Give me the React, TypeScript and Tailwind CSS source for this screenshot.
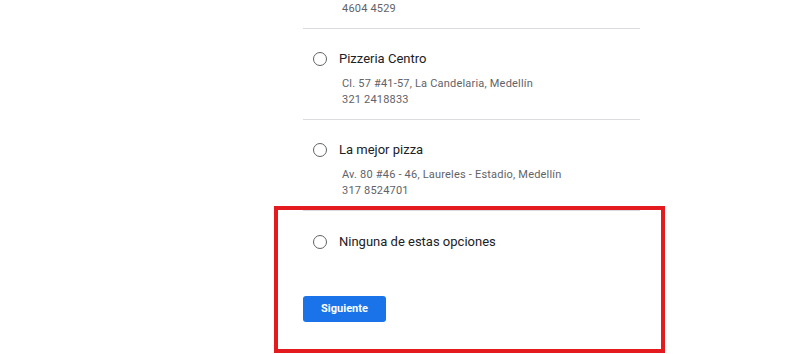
import React from "react";

type Place = { name: string; address: string; phone: string };

const places: Place[] = [
  { name: "Pizzeria Centro", address: "Cl. 57 #41-57, La Candelaria, Medellín", phone: "321 2418833" },
  { name: "La mejor pizza", address: "Av. 80 #46 - 46, Laureles - Estadio, Medellín", phone: "317 8524701" },
];

function Radio() {
  return (
    <span className="block w-[14px] h-[14px] rounded-full border-[1.3px] border-[#5f6368] shrink-0" />
  );
}

function Item({ p }: { p: Place }) {
  return (
    <div className="border-b border-[#dadce0] pt-[20px] pb-[11px]">
      <div className="flex items-center h-[20px] pl-[10px] gap-[12px]">
        <Radio />
        <span className="text-[13px] text-[#202124]">{p.name}</span>
      </div>
      <div className="mt-[7px] pl-[39px] text-[11px] leading-[16px] tracking-[0.2px] text-[#5f6368]">
        <div>{p.address}</div>
        <div>{p.phone}</div>
      </div>
    </div>
  );
}

export default function App() {
  return (
    <div
      className="relative w-[807px] h-[354px] overflow-hidden bg-white"
      style={{ fontFamily: "Roboto, 'Liberation Sans', sans-serif" }}
    >
      <div className="ml-[303px] w-[337px]">
        <div className="border-b border-[#dadce0] pt-[1px] pb-[11px]">
          <div className="pl-[39px] text-[11px] leading-[16px] tracking-[0.2px] text-[#5f6368]">4604 4529</div>
        </div>
        {places.map((p) => (
          <Item key={p.name} p={p} />
        ))}
        <div className="pt-[21px]">
          <div className="flex items-center h-[20px] pl-[10px] gap-[12px]">
            <Radio />
            <span className="text-[13px] text-[#202124]">Ninguna de estas opciones</span>
          </div>
        </div>
        <div className="mt-[43px]">
          <button className="w-[83px] h-[26px] rounded-[3px] bg-[#1a73e8] text-white text-[11px] font-bold">
            Siguiente
          </button>
        </div>
      </div>
      <div className="absolute left-[274px] top-[206px] w-[391px] h-[147px] border-4 border-[#e31b1e] pointer-events-none" />
    </div>
  );
}
